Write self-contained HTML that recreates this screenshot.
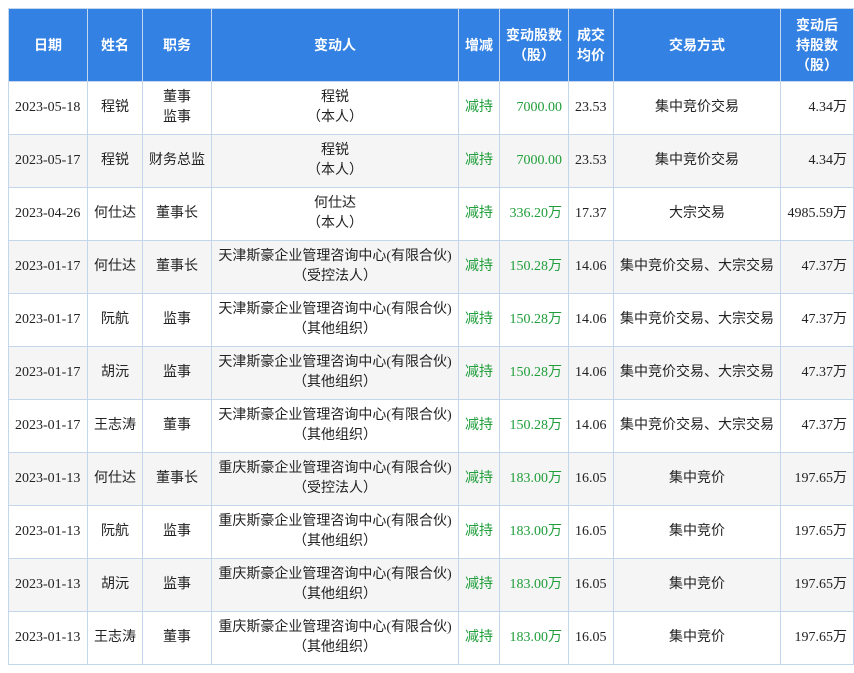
<!DOCTYPE html>
<html><head><meta charset="utf-8"><style>
body{margin:0;background:#fff;}
table{position:absolute;left:8px;top:8px;border-collapse:collapse;table-layout:fixed;width:845px;font-family:"Liberation Serif","Noto Sans CJK SC",serif;font-size:14px;color:#222;}
td,th{border:1px solid #c3d6ec;padding:0 3px;line-height:20px;}
th{background:#3381e3;color:#fff;font-family:"Liberation Sans","Noto Sans CJK SC",sans-serif;font-weight:bold;height:72px;text-align:center;}
td{height:52px;text-align:center;}
tbody tr:nth-child(even) td{background:#f5f5f5;}
.l{text-align:left;padding-left:6px;}
.r{text-align:right;padding-right:6px;}
.g{color:#1f9e3a;}
.n{text-align:left;padding-left:6px;}
</style></head><body>
<table>
<colgroup><col style="width:79px"><col style="width:55px"><col style="width:69px"><col style="width:247px"><col style="width:41px"><col style="width:69px"><col style="width:45px"><col style="width:167px"><col style="width:73px"></colgroup>
<thead><tr><th>日期</th><th>姓名</th><th>职务</th><th>变动人</th><th>增减</th><th>变动股数<br>（股）</th><th>成交<br>均价</th><th>交易方式</th><th>变动后<br>持股数<br>（股）</th></tr></thead>
<tbody>
<tr><td class="l">2023-05-18</td><td>程锐</td><td>董事<br>监事</td><td>程锐<br>（本人）</td><td class="g">减持</td><td class="r g">7000.00</td><td class="n">23.53</td><td>集中竞价交易</td><td class="r">4.34万</td></tr>
<tr><td class="l">2023-05-17</td><td>程锐</td><td>财务总监</td><td>程锐<br>（本人）</td><td class="g">减持</td><td class="r g">7000.00</td><td class="n">23.53</td><td>集中竞价交易</td><td class="r">4.34万</td></tr>
<tr><td class="l">2023-04-26</td><td>何仕达</td><td>董事长</td><td>何仕达<br>（本人）</td><td class="g">减持</td><td class="r g">336.20万</td><td class="n">17.37</td><td>大宗交易</td><td class="r">4985.59万</td></tr>
<tr><td class="l">2023-01-17</td><td>何仕达</td><td>董事长</td><td>天津斯豪企业管理咨询中心(有限合伙)<br>（受控法人）</td><td class="g">减持</td><td class="r g">150.28万</td><td class="n">14.06</td><td>集中竞价交易、大宗交易</td><td class="r">47.37万</td></tr>
<tr><td class="l">2023-01-17</td><td>阮航</td><td>监事</td><td>天津斯豪企业管理咨询中心(有限合伙)<br>（其他组织）</td><td class="g">减持</td><td class="r g">150.28万</td><td class="n">14.06</td><td>集中竞价交易、大宗交易</td><td class="r">47.37万</td></tr>
<tr><td class="l">2023-01-17</td><td>胡沅</td><td>监事</td><td>天津斯豪企业管理咨询中心(有限合伙)<br>（其他组织）</td><td class="g">减持</td><td class="r g">150.28万</td><td class="n">14.06</td><td>集中竞价交易、大宗交易</td><td class="r">47.37万</td></tr>
<tr><td class="l">2023-01-17</td><td>王志涛</td><td>董事</td><td>天津斯豪企业管理咨询中心(有限合伙)<br>（其他组织）</td><td class="g">减持</td><td class="r g">150.28万</td><td class="n">14.06</td><td>集中竞价交易、大宗交易</td><td class="r">47.37万</td></tr>
<tr><td class="l">2023-01-13</td><td>何仕达</td><td>董事长</td><td>重庆斯豪企业管理咨询中心(有限合伙)<br>（受控法人）</td><td class="g">减持</td><td class="r g">183.00万</td><td class="n">16.05</td><td>集中竞价</td><td class="r">197.65万</td></tr>
<tr><td class="l">2023-01-13</td><td>阮航</td><td>监事</td><td>重庆斯豪企业管理咨询中心(有限合伙)<br>（其他组织）</td><td class="g">减持</td><td class="r g">183.00万</td><td class="n">16.05</td><td>集中竞价</td><td class="r">197.65万</td></tr>
<tr><td class="l">2023-01-13</td><td>胡沅</td><td>监事</td><td>重庆斯豪企业管理咨询中心(有限合伙)<br>（其他组织）</td><td class="g">减持</td><td class="r g">183.00万</td><td class="n">16.05</td><td>集中竞价</td><td class="r">197.65万</td></tr>
<tr><td class="l">2023-01-13</td><td>王志涛</td><td>董事</td><td>重庆斯豪企业管理咨询中心(有限合伙)<br>（其他组织）</td><td class="g">减持</td><td class="r g">183.00万</td><td class="n">16.05</td><td>集中竞价</td><td class="r">197.65万</td></tr>
</tbody></table>
</body></html>
